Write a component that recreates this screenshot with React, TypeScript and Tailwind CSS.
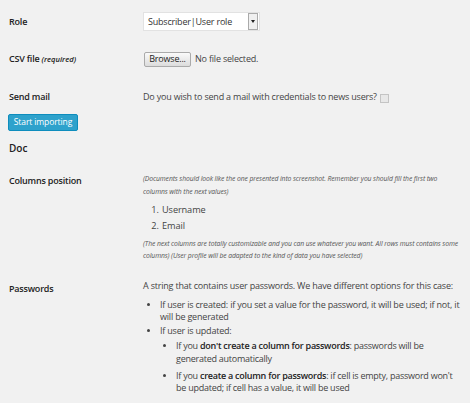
import React from 'react';

const font = { fontFamily: '"Open Sans", "Noto Sans", sans-serif' };

function Row({ label, children, className = '' }: { label: React.ReactNode; children: React.ReactNode; className?: string }) {
  return (
    <div className={`flex ${className}`}>
      <div className="w-[143px] shrink-0 pl-[9px] font-semibold text-[#222]">{label}</div>
      <div className="flex-1 pr-[5px]">{children}</div>
    </div>
  );
}

export default function App() {
  return (
    <div className="w-[470px] h-[403px] bg-[#f1f1f1] text-[#444] text-[9px] tracking-[-0.2px] leading-[12px] overflow-hidden" style={font}>
      <div className="pt-[12px]">
        <Row label={<div className="h-[19px] flex items-center pt-[1px]">Role</div>}>
          <div className="w-[117px] h-[19px] bg-white border border-[#e2e2e2] flex items-center justify-between pl-[4px] pr-[1px]">
            <span className="text-[#333]">Subscriber|User role</span>
            <span className="w-[10px] h-[17px] border border-[#aaa] bg-[#f0f0f0] flex items-center justify-center">
              <span className="border-l-[2.5px] border-r-[2.5px] border-t-[3px] border-l-transparent border-r-transparent border-t-[#222]" />
            </span>
          </div>
        </Row>

        <Row
          label={<div className="h-[16px] flex items-center">CSV file&nbsp;<i className="text-[7.6px] tracking-normal font-semibold">(required)</i></div>}
          className="mt-[20px]"
        >
          <div className="h-[16px] flex items-center gap-[4px]">
            <span className="h-[15px] w-[47px] ml-[1px] border border-[#aaa] rounded-[2px] bg-gradient-to-b from-[#fafafa] to-[#dcdcdc] text-[#222] flex items-center justify-center">Browse...</span>
            <span>No file selected.</span>
          </div>
        </Row>

        <Row label={<div className="h-[12px] flex items-center">Send mail</div>} className="mt-[24px]">
          <div className="h-[12px] flex items-center gap-[3px]">
            <span>Do you wish to send a mail with credentials to news users?</span>
            <span className="w-[9px] h-[9px] border border-[#c4c4c4] bg-[#e8e8e8] mt-[2px]" />
          </div>
        </Row>

        <div className="pl-[8px] mt-[11px]">
          <button className="h-[17px] w-[70px] bg-[#2ea2cc] border border-[#0e8dbd] text-white rounded-[2px] text-[8.5px] tracking-[-0.1px] leading-none">
            Start importing
          </button>
        </div>

        <div className="pl-[9px] mt-[10px] h-[14px] flex items-center font-semibold text-[10px] tracking-normal text-[#222]">Doc</div>

        <Row label={<div className="pt-[2px] leading-[13px]">Columns position</div>} className="mt-[17px]">
          <div className="text-[6.8px] tracking-[-0.1px] leading-[13px] italic text-[#555] pr-[14px]">
            (Documents should look like the one presented into screenshot. Remember you should fill the first two columns with the next values)
          </div>
          <ol className="list-decimal pl-[18px] mt-[4px] text-[9.2px] tracking-[-0.1px] leading-[16px]">
            <li className="pl-[1px]">Username</li>
            <li className="pl-[1px]">Email</li>
          </ol>
          <div className="text-[6.8px] tracking-[-0.1px] leading-[12px] italic mt-[4px] text-[#555]">
            (The next columns are totally customizable and you can use whatever you want. All rows must contains some columns) (User profile will be adapted to the kind of data you have selected)
          </div>
        </Row>

        <Row label={<div className="pt-[3px]">Passwords</div>} className="mt-[18px]">
          <div>A string that contains user passwords. We have different options for this case:</div>
          <ul className="list-disc pl-[17px] mt-[7px] marker:text-[8px]">
            <li>If user is created: if you set a value for the password, it will be used; if not, it will be generated</li>
            <li className="mt-[2px]">
              If user is updated:
              <ul className="list-disc pl-[16px] mt-[2px] pr-[10px] tracking-[-0.25px]">
                <li className="leading-[13px]">
                  If you <b className="font-semibold text-[#222]">don't create a column for passwords</b>: passwords will be generated automatically
                </li>
                <li className="mt-[5px]">
                  If you <b className="font-semibold text-[#222]">create a column for passwords</b>: if cell is empty, password won't be updated; if cell has a value, it will be used
                </li>
              </ul>
            </li>
          </ul>
        </Row>
      </div>
    </div>
  );
}
